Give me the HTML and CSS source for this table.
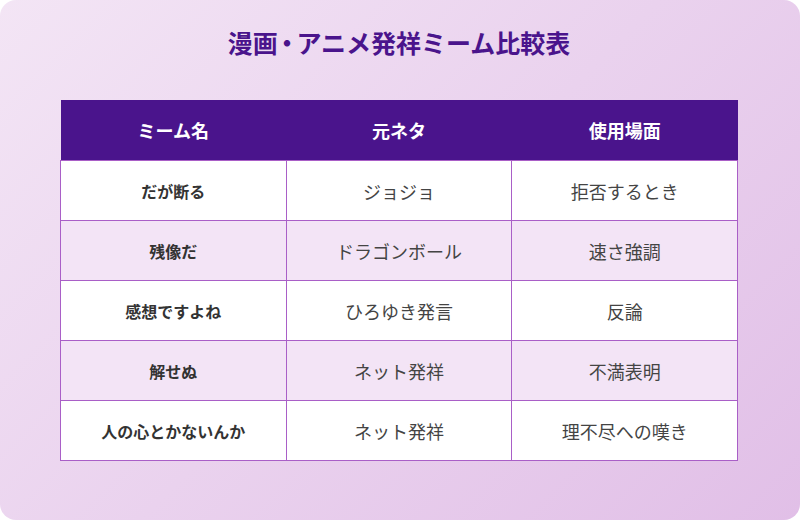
FILE: index.html
```html
<!DOCTYPE html>
<html lang="ja">
<head>
<meta charset="utf-8">
<link rel="stylesheet" href="styles.css">
</head>
<body>
<div class="card">
  <h1 class="title">漫画<span class="dot">・</span>アニメ発祥ミーム比較表</h1>
  <table class="memes">
    <thead>
      <tr><th>ミーム名</th><th>元ネタ</th><th>使用場面</th></tr>
    </thead>
    <tbody>
      <tr><td class="name">だが断る</td><td>ジョジョ</td><td>拒否するとき</td></tr>
      <tr><td class="name">残像だ</td><td>ドラゴンボール</td><td>速さ強調</td></tr>
      <tr><td class="name">感想ですよね</td><td>ひろゆき発言</td><td>反論</td></tr>
      <tr><td class="name">解せぬ</td><td>ネット発祥</td><td>不満表明</td></tr>
      <tr><td class="name">人の心とかないんか</td><td>ネット発祥</td><td>理不尽への嘆き</td></tr>
    </tbody>
  </table>
</div>
</body>
</html>
```
FILE: styles.css
```css
html, body {
  margin: 0;
  padding: 0;
  background: #ffffff;
}
body {
  font-family: "Noto Sans CJK JP", "Noto Sans", sans-serif;
}
.card {
  width: 800px;
  height: 520px;
  box-sizing: border-box;
  border-radius: 16px;
  background: linear-gradient(135deg, #f3e5f5 0%, #e1bfe7 100%);
  padding: 24px 62px 0 60px;
}
.title {
  margin: 0;
  height: 76px;
  text-align: center;
  font-size: 25px;
  line-height: 36px;
  font-weight: 700;
  color: #4a148c;
}
.title .dot {
  font-feature-settings: "palt";
  padding: 0 3px;
}
.memes {
  width: 678px;
  border-collapse: collapse;
  table-layout: fixed;
}
.memes th {
  height: 60px;
  padding: 0;
  background: #4a148c;
  color: #ffffff;
  font-size: 18px;
  font-weight: 700;
  text-align: center;
}
.memes td {
  height: 59px;
  padding: 0;
  border: 1px solid #a95fc7;
  text-align: center;
  font-size: 18px;
  font-weight: 400;
  color: #444444;
  background: #ffffff;
}
.memes tbody tr:nth-child(even) td {
  background: #f3e4f6;
}
.memes td.name {
  font-size: 16px;
  font-weight: 700;
  color: #333333;
}
```
